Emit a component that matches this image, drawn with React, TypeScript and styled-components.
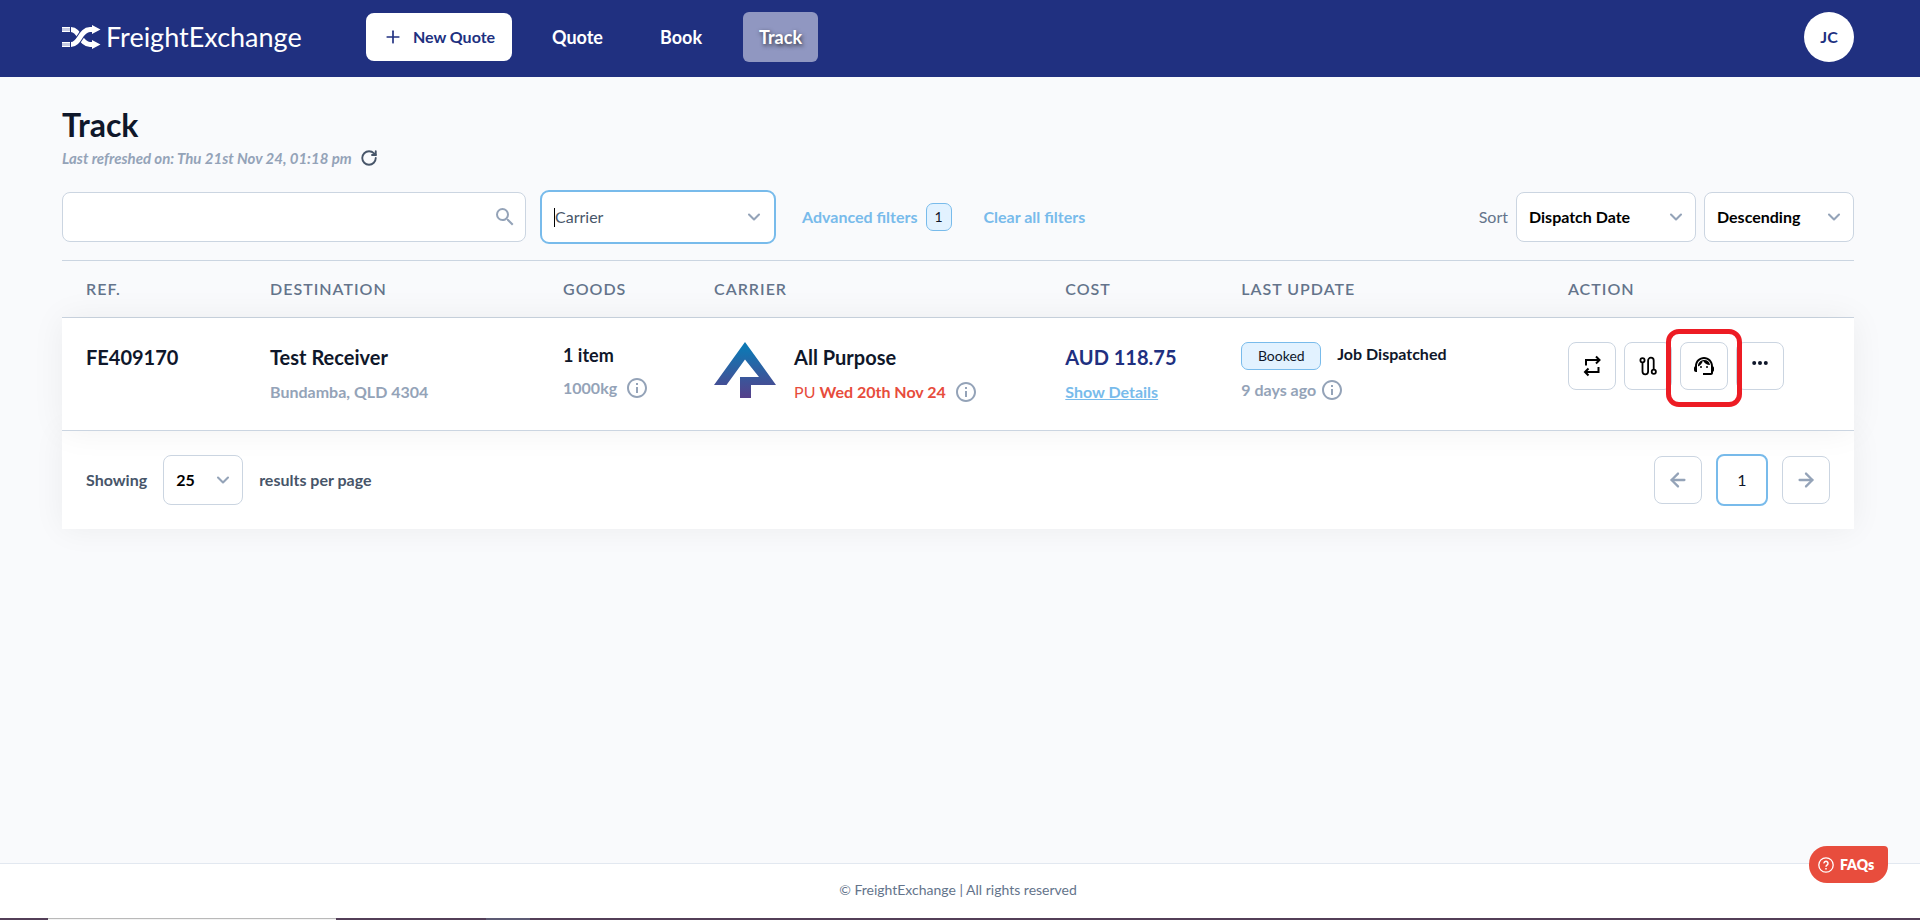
import React from "react";
import styled, { createGlobalStyle, css } from "styled-components";
import { ArrowLeft, ArrowRight, ChevronDown, Plus, RotateCw } from "lucide-react";
import { MdInfoOutline, MdSearch, MdSupportAgent } from "react-icons/md";

const c = {
  navy: "#203080",
  ink: "#0f172a",
  slate: "#475569",
  muted: "#64748b",
  soft: "#94a3b8",
  line: "#cbd5e1",
  sky: "#78bbeb",
  skyPale: "#e2f2ff",
  red: "#e74c3c",
  page: "#f9fafc",
};

const GlobalStyle = createGlobalStyle`
  *, *::before, *::after { box-sizing: border-box; }
  body {
    margin: 0;
    background: ${c.page};
    color: ${c.ink};
    font-family: Lato, "Liberation Sans", sans-serif;
    font-size: 16px;
    line-height: 24px;
  }
  button, input, select { font: inherit; color: inherit; }
  button { cursor: pointer; padding: 0; }
  h1, p { margin: 0; }
  svg { display: block; flex: none; }
`;

const Page = styled.div`
  min-height: 100vh;
  display: flex;
  flex-direction: column;
`;

const TopBar = styled.header`
  display: flex;
  align-items: center;
  height: 77px;
  padding: 0 66px 3px 62px;
  background: ${c.navy};
`;

const Brand = styled.a`
  display: flex;
  align-items: center;
  gap: 5px;
  width: 304px;
  color: #fff;
  font-size: 27px;
  line-height: 32px;
  text-decoration: none;
`;

const NewQuote = styled.button`
  display: flex;
  align-items: center;
  justify-content: center;
  gap: 10px;
  width: 146px;
  height: 48px;
  border: 0;
  border-radius: 8px;
  background: #fff;
  color: ${c.navy};
  font-weight: 700;
`;

const Nav = styled.nav`
  display: flex;
  align-items: center;
  gap: 25px;
  margin-left: 24px;
`;

const NavLink = styled.a<{ $active?: boolean }>`
  padding: 13px 16px;
  border-radius: 6px;
  color: #fff;
  font-size: 18px;
  font-weight: 700;
  text-decoration: none;
  ${(p) =>
    p.$active &&
    css`
      background: #9097c1;
      text-shadow: 1px 2px 4px rgba(0, 0, 0, 0.7);
    `}
`;

const Avatar = styled.button`
  width: 50px;
  height: 50px;
  margin-left: auto;
  border: 0;
  border-radius: 50%;
  background: #fff;
  color: ${c.navy};
  font-weight: 700;
`;

const Main = styled.main`
  flex: 1;
  padding: 28px 66px 48px 62px;
`;

const Title = styled.h1`
  font-size: 32px;
  line-height: 40px;
  font-weight: 700;
`;

const Refreshed = styled.div`
  display: flex;
  align-items: center;
  gap: 8px;
  height: 26px;
  color: ${c.soft};
  font-size: 15px;
  font-weight: 700;
  font-style: italic;
`;

const IconButton = styled.button`
  display: flex;
  border: 0;
  background: none;
  color: ${c.slate};
`;

const Filters = styled.div`
  display: flex;
  align-items: center;
  margin: 19px 0 16px;
`;

const SearchBox = styled.div`
  display: flex;
  align-items: center;
  width: 464px;
  height: 50px;
  padding: 0 8px 0 12px;
  border: 1px solid ${c.line};
  border-radius: 8px;
  background: #fff;
  color: ${c.soft};
`;

const BareInput = styled.input`
  flex: 1;
  min-width: 0;
  padding: 0;
  border: 0;
  outline: 0;
  background: none;
  color: ${c.ink};
  caret-color: transparent;
  &::placeholder { color: ${c.slate}; opacity: 1; }
`;

const CarrierBox = styled(SearchBox)`
  width: 236px;
  height: 54px;
  margin-left: 14px;
  padding: 0 10px 0 12px;
  border: 2px solid ${c.sky};
  border-radius: 9px;
`;

const Caret = styled.span`
  width: 1px;
  height: 19px;
  background: #000;
`;

const TextButton = styled.button`
  display: flex;
  align-items: center;
  gap: 8px;
  margin-left: 26px;
  border: 0;
  background: none;
  color: ${c.sky};
  font-weight: 700;
  & + & { margin-left: 32px; }
`;

const Chip = styled.span<{ $wide?: boolean }>`
  display: flex;
  align-items: center;
  justify-content: center;
  width: ${(p) => (p.$wide ? 80 : 26)}px;
  height: 28px;
  border: 1px solid ${c.sky};
  border-radius: 7px;
  background: ${c.skyPale};
  color: ${c.ink};
  font-size: 14px;
  font-weight: 400;
`;

const SortGroup = styled.div`
  display: flex;
  align-items: center;
  gap: 8px;
  margin-left: auto;
  color: ${c.muted};
`;

const SelectWrap = styled.div<{ $w: number }>`
  position: relative;
  width: ${(p) => p.$w}px;
  color: ${c.soft};
  svg {
    position: absolute;
    top: 15px;
    right: 10px;
    pointer-events: none;
  }
`;

const SelectBox = styled.select`
  display: block;
  width: 100%;
  height: 50px;
  padding: 0 12px;
  border: 1px solid ${c.line};
  border-radius: 8px;
  appearance: none;
  background: #fff;
  color: #000;
  font-weight: 700;
`;

const Table = styled.table`
  width: 100%;
  border-collapse: separate;
  border-spacing: 0;
  table-layout: fixed;
  text-align: left;
`;

const HeadCell = styled.th<{ $w: number }>`
  width: ${(p) => p.$w}%;
  height: 58px;
  padding: 0 0 0 24px;
  border-top: 1px solid ${c.line};
  border-bottom: 1px solid ${c.line};
  color: ${c.muted};
  font-weight: 600;
  letter-spacing: 1px;
`;

const Row = styled.tr`
  position: relative;
  background: #fff;
  box-shadow: 0 0 32px rgba(0, 0, 0, 0.06);
`;

const Cell = styled.td`
  height: 113px;
  padding: 24px 0 0 24px;
  border-bottom: 1px solid ${c.line};
  vertical-align: top;
`;

const Strong = styled.p<{ $blue?: boolean }>`
  color: ${(p) => (p.$blue ? c.navy : c.ink)};
  font-size: 20px;
  line-height: 30px;
  font-weight: 700;
`;

const Items = styled.p`
  font-size: 18px;
  line-height: 26px;
  font-weight: 700;
`;

const Sub = styled.p<{ $gap?: number }>`
  display: flex;
  align-items: center;
  gap: ${(p) => p.$gap ?? 8}px;
  padding-top: 8px;
  color: ${c.soft};
  font-weight: 700;
  span { color: ${c.red}; font-weight: 400; }
  b { font-weight: 700; }
`;

const CarrierCell = styled.div`
  display: flex;
  gap: 18px;
`;

const Details = styled.a`
  display: inline-block;
  padding-top: 8px;
  color: ${c.sky};
  font-weight: 700;
`;

const Status = styled.div`
  display: flex;
  gap: 16px;
  font-weight: 700;
`;

const Actions = styled.div`
  display: flex;
  gap: 8px;
`;

const Square = styled.button<{ $current?: boolean }>`
  display: flex;
  align-items: center;
  justify-content: center;
  width: ${(p) => (p.$current ? 52 : 48)}px;
  height: ${(p) => (p.$current ? 52 : 48)}px;
  border: ${(p) => (p.$current ? `2px solid ${c.sky}` : `1px solid ${c.line}`)};
  border-radius: 8px;
  background: #fff;
`;

const Marked = styled.div`
  position: relative;
  z-index: 1;
  &::after {
    content: "";
    position: absolute;
    inset: -13px -14px -17px;
    border: 5px solid #ed1c24;
    border-radius: 13px;
    pointer-events: none;
  }
`;

const TableFoot = styled.div`
  display: flex;
  align-items: center;
  gap: 16px;
  height: 98px;
  padding: 0 24px;
  background: #fff;
  box-shadow: 0 0 32px rgba(0, 0, 0, 0.06);
  color: ${c.slate};
  font-weight: 700;
`;

const Pager = styled.nav`
  display: flex;
  align-items: center;
  gap: 14px;
  margin-left: auto;
  color: ${c.soft};
  font-weight: 400;
  [aria-current] { color: ${c.ink}; }
`;

const Footer = styled.footer`
  height: 55px;
  padding: 14px 4px 0 0;
  border-top: 1px solid #e2e8f0;
  background: #fff;
  color: ${c.muted};
  font-size: 14px;
  text-align: center;
`;

const Dock = styled.div`
  display: flex;
  height: 2px;
  background: #533f58;
`;

const DockWindow = styled.div`
  width: 288px;
  margin-left: 48px;
  border-top: 1px solid #b9b9b9;
  background: #f3f3f3;
`;

const DockItem = styled.div`
  width: 44px;
  margin-left: 150px;
  background: #5d5b74;
`;

const Faq = styled.button`
  position: fixed;
  right: 32px;
  bottom: 37px;
  display: flex;
  align-items: center;
  gap: 6px;
  width: 79px;
  height: 37px;
  padding-left: 9px;
  border: 0;
  border-radius: 18px 4px 18px 18px;
  background: #e84d3d;
  color: #fff;
  font-size: 14px;
  font-weight: 800;
`;

const LogoMark = () => (
  <svg width="39" height="24" viewBox="0 0 39 24" fill="none" aria-hidden="true">
    <path d="M0 2h8v5H0zM0 17h8v5H0z" fill="#c5cae2" />
    <path d="M0 2.500h8M0 6.500h8M0 17.500h8M0 21.500h8" stroke="#fff" />
    <path d="M9 4.500c9 0 9 15 19 15h3" stroke="#fff" strokeWidth="5" />
    <path d="M9 19.500c9 0 9-15 19-15h3" stroke={c.navy} strokeWidth="7" />
    <path d="M9 19.500c9 0 9-15 19-15h3" stroke="#fff" strokeWidth="5" />
    <path d="M30 0l8.500 4.500L30 9zM30 15l8.500 4.500L30 24z" fill="#fff" />
  </svg>
);

const CarrierLogo = () => (
  <svg width="62" height="56" viewBox="0 0 62 56" role="img" aria-label="All Purpose">
    <defs>
      <linearGradient id="carrier" x1="0" y1="0" x2="0" y2="1">
        <stop offset="0.100" stopColor="#0e78b4" />
        <stop offset="1" stopColor="#56408a" />
      </linearGradient>
    </defs>
    <path d="M31 0l31 43H37v13H26V35h19L31 17.500 12.500 43H0z" fill="url(#carrier)" />
  </svg>
);

const RepeatIcon = () => (
  <svg width="24" height="24" viewBox="0 0 24 24" fill="none" stroke="#000" strokeWidth="2">
    <path d="M6 11.500V6h13M16 2.500L19.500 6 16 9.500M18.500 13v5H5M8.500 14.500L5 18l3.500 3.500" />
  </svg>
);

const RouteIcon = () => (
  <svg width="24" height="24" viewBox="0 0 24 24" fill="none" stroke="#000" strokeWidth="1.800">
    <circle cx="6.500" cy="6.200" r="2.100" />
    <circle cx="17.800" cy="17.800" r="2.100" />
    <path d="M6.500 8.500v9a2.800 2.800 0 0 0 5.600 0v-11a2.800 2.800 0 0 1 5.600 0v9" />
  </svg>
);

const DotsIcon = () => (
  <svg width="24" height="24" viewBox="0 0 24 24" fill={c.ink}>
    <circle cx="6.200" cy="9" r="2" />
    <circle cx="12" cy="9" r="2" />
    <circle cx="17.800" cy="9" r="2" />
  </svg>
);

const HelpIcon = () => (
  <svg width="16" height="16" viewBox="0 0 16 16" fill="none" stroke="#fff" strokeWidth="1.300">
    <circle cx="8" cy="8" r="7.200" />
    <path d="M6 6.400a2 2 0 1 1 3.200 1.500C8.400 8.500 8 8.700 8 9.700" strokeWidth="1.500" />
    <path d="M8 10.900v1.500" strokeWidth="1.500" />
  </svg>
);

const Select = ({ label, value, w }: { label: string; value: string; w: number }) => (
  <SelectWrap $w={w}>
    <SelectBox aria-label={label} defaultValue={value}>
      <option>{value}</option>
    </SelectBox>
    <ChevronDown size={20} strokeWidth={2.5} />
  </SelectWrap>
);

const columns: [string, number][] = [
  ["REF.", 10.27],
  ["DESTINATION", 16.35],
  ["GOODS", 8.43],
  ["CARRIER", 19.6],
  ["COST", 9.82],
  ["LAST UPDATE", 18.23],
  ["ACTION", 17.3],
];

export default function App() {
  return (
    <Page>
      <GlobalStyle />
      <TopBar>
        <Brand href="#">
          <LogoMark />
          FreightExchange
        </Brand>
        <NewQuote>
          <Plus size={20} />
          New Quote
        </NewQuote>
        <Nav>
          <NavLink href="#quote">Quote</NavLink>
          <NavLink href="#book">Book</NavLink>
          <NavLink href="#track" $active>
            Track
          </NavLink>
        </Nav>
        <Avatar>JC</Avatar>
      </TopBar>

      <Main>
        <Title>Track</Title>
        <Refreshed>
          Last refreshed on: Thu 21st Nov 24, 01:18 pm
          <IconButton aria-label="Refresh">
            <RotateCw size={18} strokeWidth={2.5} />
          </IconButton>
        </Refreshed>

        <Filters>
          <SearchBox>
            <BareInput aria-label="Search" />
            <MdSearch size={24} />
          </SearchBox>
          <CarrierBox>
            <Caret />
            <BareInput aria-label="Carrier" placeholder="Carrier" />
            <ChevronDown size={20} strokeWidth={2.5} />
          </CarrierBox>
          <TextButton>
            Advanced filters <Chip>1</Chip>
          </TextButton>
          <TextButton>Clear all filters</TextButton>
          <SortGroup>
            Sort
            <Select label="Sort by" value="Dispatch Date" w={180} />
            <Select label="Sort order" value="Descending" w={150} />
          </SortGroup>
        </Filters>

        <Table>
          <thead>
            <tr>
              {columns.map(([name, w]) => (
                <HeadCell key={name} $w={w}>
                  {name}
                </HeadCell>
              ))}
            </tr>
          </thead>
          <tbody>
            <Row>
              <Cell>
                <Strong>FE409170</Strong>
              </Cell>
              <Cell>
                <Strong>Test Receiver</Strong>
                <Sub>Bundamba, QLD 4304</Sub>
              </Cell>
              <Cell>
                <Items>1 item</Items>
                <Sub>
                  1000kg <MdInfoOutline size={24} />
                </Sub>
              </Cell>
              <Cell>
                <CarrierCell>
                  <CarrierLogo />
                  <div>
                    <Strong>All Purpose</Strong>
                    <Sub>
                      <span>
                        PU <b>Wed 20th Nov 24</b>
                      </span>
                      <MdInfoOutline size={24} />
                    </Sub>
                  </div>
                </CarrierCell>
              </Cell>
              <Cell>
                <Strong $blue>AUD 118.75</Strong>
                <Details href="#details">Show Details</Details>
              </Cell>
              <Cell>
                <Status>
                  <Chip $wide>Booked</Chip>
                  Job Dispatched
                </Status>
                <Sub $gap={4}>
                  9 days ago <MdInfoOutline size={24} />
                </Sub>
              </Cell>
              <Cell>
                <Actions>
                  <Square aria-label="Repeat">
                    <RepeatIcon />
                  </Square>
                  <Square aria-label="Route">
                    <RouteIcon />
                  </Square>
                  <Marked>
                    <Square aria-label="Support">
                      <MdSupportAgent size={24} color="#000" />
                    </Square>
                  </Marked>
                  <Square aria-label="More">
                    <DotsIcon />
                  </Square>
                </Actions>
              </Cell>
            </Row>
          </tbody>
        </Table>

        <TableFoot>
          Showing
          <Select label="Results per page" value="25" w={80} />
          results per page
          <Pager aria-label="Pages">
            <Square aria-label="Previous page">
              <ArrowLeft size={22} strokeWidth={2.5} />
            </Square>
            <Square $current aria-current="page">
              1
            </Square>
            <Square aria-label="Next page">
              <ArrowRight size={22} strokeWidth={2.5} />
            </Square>
          </Pager>
        </TableFoot>
      </Main>

      <Footer>© FreightExchange | All rights reserved</Footer>
      <Dock>
        <DockWindow />
        <DockItem />
      </Dock>
      <Faq>
        <HelpIcon />
        FAQs
      </Faq>
    </Page>
  );
}
